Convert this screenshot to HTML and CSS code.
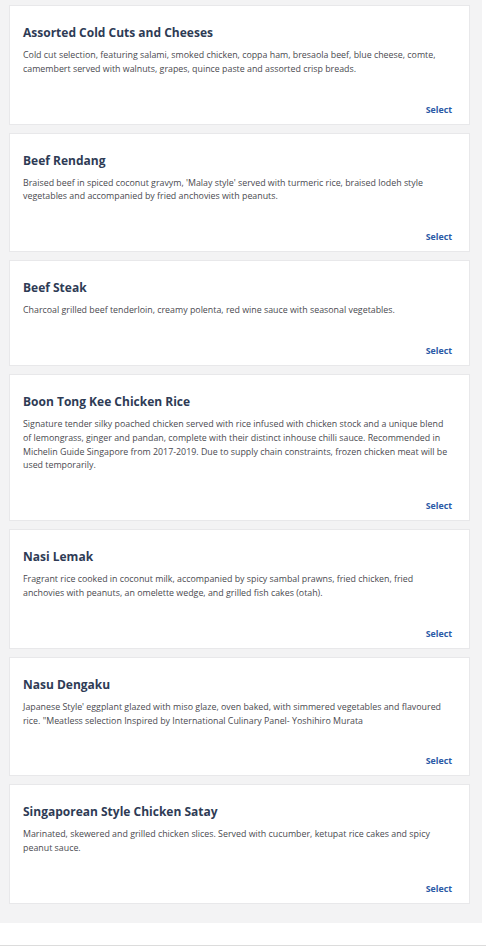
FILE: index.html
```html
<!DOCTYPE html>
<html lang="en">
<head>
<meta charset="utf-8">
<title>Menu</title>
<link rel="stylesheet" href="styles.css">
</head>
<body>
<main class="list">
  <section class="card">
    <h2 class="title">Assorted Cold Cuts and Cheeses</h2>
    <p class="desc">Cold cut selection, featuring salami, smoked chicken, coppa ham, bresaola beef, blue cheese, comte, camembert served with walnuts, grapes, quince paste and assorted crisp breads.</p>
    <div class="actions"><a class="select">Select</a></div>
  </section>
  <section class="card">
    <h2 class="title">Beef Rendang</h2>
    <p class="desc">Braised beef in spiced coconut gravym, 'Malay style' served with turmeric rice, braised lodeh style vegetables and accompanied by fried anchovies with peanuts.</p>
    <div class="actions"><a class="select">Select</a></div>
  </section>
  <section class="card">
    <h2 class="title">Beef Steak</h2>
    <p class="desc">Charcoal grilled beef tenderloin, creamy polenta, red wine sauce with seasonal vegetables.</p>
    <div class="actions"><a class="select">Select</a></div>
  </section>
  <section class="card">
    <h2 class="title">Boon Tong Kee Chicken Rice</h2>
    <p class="desc">Signature tender silky poached chicken served with rice infused with chicken stock and a unique blend of lemongrass, ginger and pandan, complete with their distinct inhouse chilli sauce. Recommended in Michelin Guide Singapore from 2017-2019. Due to supply chain constraints, frozen chicken meat will be used temporarily.</p>
    <div class="actions"><a class="select">Select</a></div>
  </section>
  <section class="card">
    <h2 class="title">Nasi Lemak</h2>
    <p class="desc">Fragrant rice cooked in coconut milk, accompanied by spicy sambal prawns, fried chicken, fried anchovies with peanuts, an omelette wedge, and grilled fish cakes (otah).</p>
    <div class="actions"><a class="select">Select</a></div>
  </section>
  <section class="card">
    <h2 class="title">Nasu Dengaku</h2>
    <p class="desc">Japanese Style' eggplant glazed with miso glaze, oven baked, with simmered vegetables and flavoured rice. "Meatless selection Inspired by International Culinary Panel- Yoshihiro Murata</p>
    <div class="actions"><a class="select">Select</a></div>
  </section>
  <section class="card">
    <h2 class="title">Singaporean Style Chicken Satay</h2>
    <p class="desc">Marinated, skewered and grilled chicken slices. Served with cucumber, ketupat rice cakes and spicy peanut sauce.</p>
    <div class="actions"><a class="select">Select</a></div>
  </section>
</main>
<footer class="footer"></footer>
</body>
</html>
```
FILE: styles.css
```css
html, body {
  margin: 0;
  padding: 0;
  background: #ffffff;
}
body {
  font-family: "Open Sans", "Liberation Sans", sans-serif;
  width: 486px;
}
.list {
  width: 482px;
  box-sizing: border-box;
  background: #f3f3f4;
  padding: 5px 12px 19px 9px;
  display: flex;
  flex-direction: column;
  gap: 8px;
}
.card {
  background: #ffffff;
  border: 1px solid #e8e8ea;
  padding: 19px 17px 7px 13px;
  display: flex;
  flex-direction: column;
}
.title {
  margin: 0;
  font-size: 12px;
  line-height: 16px;
  font-weight: 700;
  color: #2e3b55;
}
.desc {
  margin: 8px 0 0;
  font-size: 8.85px;
  line-height: 13.8px;
  color: #4a4a4f;
}
.actions {
  display: flex;
  justify-content: flex-end;
  margin-top: 26px;
}
.select {
  font-size: 8.8px;
  line-height: 14px;
  font-weight: 700;
  color: #2b5aa6;
  cursor: pointer;
}
.footer {
  height: 22px;
  border-bottom: 1px solid #dcdcdc;
}
```
